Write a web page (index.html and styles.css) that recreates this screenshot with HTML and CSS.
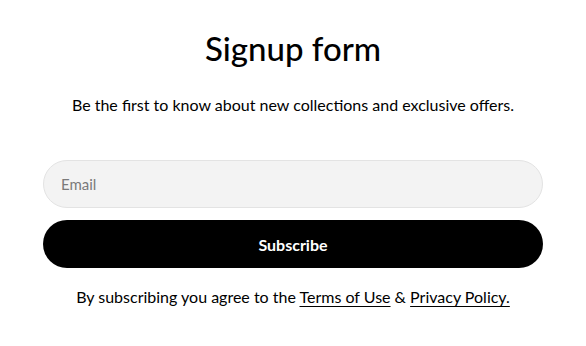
FILE: index.html
```html
<!DOCTYPE html>
<html lang="en">
<head>
<meta charset="utf-8">
<link rel="stylesheet" href="styles.css">
</head>
<body>
<main class="signup">
  <h1 class="signup__title">Signup form</h1>
  <p class="signup__lead">Be the first to know about new collections and exclusive offers.</p>
  <form class="signup__form">
    <input class="signup__input" type="email" placeholder="Email">
    <button class="signup__button" type="button">Subscribe</button>
  </form>
  <p class="signup__legal">By subscribing you agree to the <a href="#">Terms of Use</a> &amp; <a href="#">Privacy Policy.</a></p>
</main>
</body>
</html>
```

FILE: styles.css
```css
* { box-sizing: border-box; }
html, body { margin: 0; background: #fff; }
body {
  font-family: "Lato", "Noto Sans", sans-serif;
  color: #000;
}
.signup {
  width: 500px;
  margin: 0 auto;
  padding-top: 28px;
  display: flex;
  flex-direction: column;
  align-items: stretch;
  text-align: center;
}
.signup__title {
  margin: 0;
  font-size: 33px;
  line-height: 40px;
  font-weight: 500;
}
.signup__lead {
  margin: 27px 0 0;
  font-size: 16px;
  line-height: 20px;
}
.signup__form {
  margin-top: 45px;
  display: flex;
  flex-direction: column;
  gap: 12px;
}
.signup__input {
  height: 48px;
  border: 1px solid #e3e3e3;
  border-radius: 24px;
  background: #f3f3f3;
  padding: 0 17px;
  font: inherit;
  font-size: 15px;
  color: #000;
  outline: none;
}
.signup__input::placeholder { color: #7a7a7a; }
.signup__button {
  height: 48px;
  border: 0;
  border-radius: 24px;
  background: #000;
  color: #fff;
  font: inherit;
  font-size: 16px;
  font-weight: 700;
}
.signup__legal {
  margin: 19px 0 0;
  font-size: 16px;
  line-height: 20px;
}
.signup__legal a { color: #000; text-decoration: underline; text-underline-offset: 3px; }
```
